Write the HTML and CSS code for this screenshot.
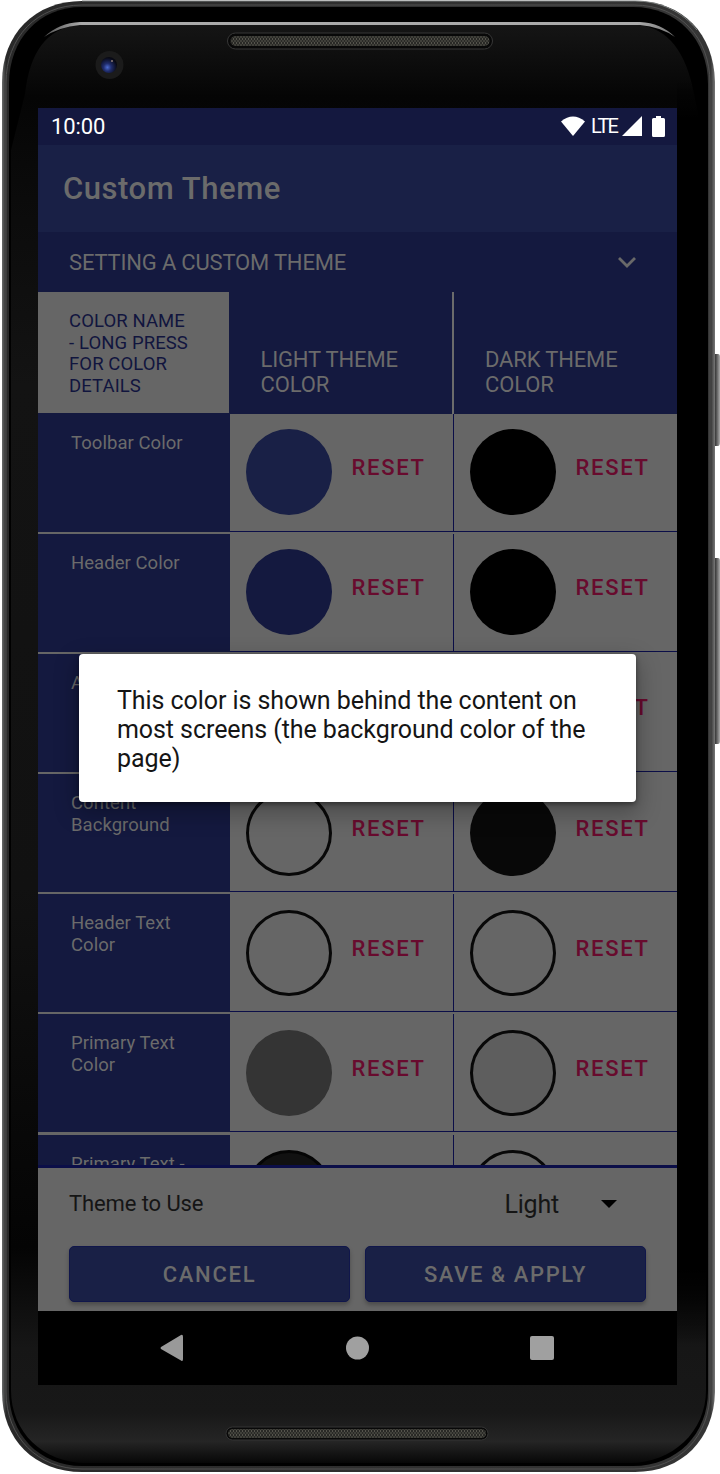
FILE: index.html
```html
<!DOCTYPE html>
<html lang="en">
<head>
<meta charset="utf-8">
<title>Custom Theme</title>
<link rel="stylesheet" href="styles.css">
</head>
<body>
<div class="phone">
  <svg class="chassis" width="720" height="1474" viewBox="0 0 720 1474" aria-hidden="true">
    <defs>
      <linearGradient id="rim" x1="0" x2="1" y1="0" y2="0"><stop offset="0" stop-color="#696b6b"/><stop offset=".006" stop-color="#292929"/><stop offset=".994" stop-color="#353535"/><stop offset="1" stop-color="#777"/></linearGradient>
      <linearGradient id="face" x1="0" x2="0" y1="0" y2="1"><stop offset="0" stop-color="#151515"/><stop offset=".05" stop-color="#050505"/><stop offset=".12" stop-color="#0b0b0b"/><stop offset=".25" stop-color="#131313"/><stop offset=".6" stop-color="#111"/><stop offset=".85" stop-color="#040404"/><stop offset=".92" stop-color="#161616"/><stop offset=".965" stop-color="#181818"/><stop offset=".985" stop-color="#252525"/><stop offset="1" stop-color="#070707"/></linearGradient>
      <linearGradient id="dim" x1="0" x2="0" y1="0" y2="1"><stop offset="0" stop-color="#000" stop-opacity="0"/><stop offset=".03" stop-color="#000"/><stop offset=".94" stop-color="#000"/><stop offset="1" stop-color="#000" stop-opacity="0"/></linearGradient>
      <linearGradient id="shine" x1="0" x2="1" y1="0" y2="0"><stop offset="0" stop-color="#555"/><stop offset=".06" stop-color="#aaa"/><stop offset=".94" stop-color="#aaa"/><stop offset="1" stop-color="#777"/></linearGradient>
      <linearGradient id="side" x1="0" x2="1" y1="0" y2="0"><stop offset="0" stop-color="#111"/><stop offset=".5" stop-color="#555"/><stop offset="1" stop-color="#aaa"/></linearGradient>
      <pattern id="mesh" width="3" height="4" patternUnits="userSpaceOnUse"><rect width="3" height="4" fill="#292926"/><path d="M1 0v2M2.500 2v2" stroke="#55544c"/></pattern>
      <radialGradient id="lens" cx=".4" cy=".65" r=".6"><stop offset="0" stop-color="#4c6bd0"/><stop offset=".4" stop-color="#202d6d"/><stop offset="1" stop-color="#080914"/></radialGradient>
    </defs>
    <path d="M713 354h5q2 0 2 3v85q0 4-2 4h-5zM713 558h5q2 0 2 3v180q0 3-2 3h-5z" fill="url(#side)"/>
    <path d="M82 1H635C683 1 714 34 715 82V1392C714 1439 682 1472 635 1472H82C35 1472 2 1440 2 1392V82C2 34 35 1 82 1Z" fill="url(#rim)"/>
    <path d="M82 1H635C660 1 683 12 697 30" fill="none" stroke="#777b7a"/>
    <path d="M82 5H634C680 5 710 38 710 83V1392C710 1436 679 1469 634 1469H82C38 1469 6 1437 6 1392V83C6 37 37 5 82 5Z" fill="none" stroke="#505050"/>
    <path d="M82 7H633C677 7 708 39 708 84V1391C708 1434 677 1466 633 1466H82C39 1466 9 1434 9 1391V84C9 39 39 7 82 7Z" fill="#000"/>
    <path d="M78 25H639Q682 30 694 94L706 150V1390C706 1432 672 1463 630 1463H86C43 1463 11 1432 11 1390V150L25 94Q32 30 78 25Z" fill="url(#face)"/>
    <path d="M677 80H707V1345H677Z" fill="url(#dim)"/>
    <path d="M44 37Q59 23 80 22H640Q661 23 675 37Q661 27 640 25H80Q59 27 44 37Z" fill="url(#shine)"/>
    <rect x="227.500" y="33" width="265" height="16" rx="8" fill="#080808" stroke="#373737"/>
    <rect x="230.500" y="36" width="259" height="10" rx="5" fill="url(#mesh)"/>
    <rect x="226" y="1427" width="262" height="13" rx="6.500" fill="#080808" stroke="#343434"/>
    <rect x="228" y="1429" width="258" height="9" rx="4.500" fill="url(#mesh)"/>
    <circle cx="109.500" cy="65" r="14" fill="#1b1b1b"/><circle cx="109" cy="65" r="8" fill="url(#lens)"/><circle cx="112" cy="61" r="1" fill="#8b7a78"/>
  </svg>

  <main class="screen">
    <header class="status">
      <span class="clock">10:00</span>
      <svg class="wifi" width="24" height="20" viewBox="0 0 24 20"><path d="M0 5.500Q12-4.500 24 5.500L12 20Z" fill="#fff"/></svg>
      <span class="lte">LTE</span>
      <svg class="signal" width="20" height="20" viewBox="0 0 20 20"><path d="M20 0V20H0Z" fill="#fff"/></svg>
      <svg class="battery" width="13" height="21" viewBox="0 0 13 21"><path d="M4 0H9V2H11.500Q13 2 13 3.500V19.500Q13 21 11.500 21H1.500Q0 21 0 19.500V3.500Q0 2 1.500 2H4Z" fill="#fff"/></svg>
    </header>
    <h1 class="toolbar"><span>Custom Theme</span></h1>
    <div class="accordion"><span class="section">SETTING A CUSTOM THEME</span><svg width="20" height="13" viewBox="0 0 20 13"><path d="M2 2L10 10L18 2" fill="none" stroke="#696969" stroke-width="2.800"/></svg></div>

    <section class="table">
      <div class="head">
        <div class="head-name">COLOR NAME<br>- LONG PRESS<br>FOR COLOR<br>DETAILS</div>
        <div class="head-theme">LIGHT THEME<br>COLOR</div>
        <div class="head-theme">DARK THEME<br>COLOR</div>
      </div>
      <div class="row"><div class="name">Toolbar Color</div><div class="cell first"><i class="swatch toolbar-color"></i><span class="reset">RESET</span></div><div class="cell"><i class="swatch black"></i><span class="reset">RESET</span></div></div>
      <div class="row"><div class="name">Header Color</div><div class="cell first"><i class="swatch header-color"></i><span class="reset">RESET</span></div><div class="cell"><i class="swatch black"></i><span class="reset">RESET</span></div></div>
      <div class="row"><div class="name">Accent</div><div class="cell first"></div><div class="cell"><i class="swatch"></i><span class="reset">RESET</span></div></div>
      <div class="row"><div class="name">Content<br>Background</div><div class="cell first"><i class="swatch outline"></i><span class="reset">RESET</span></div><div class="cell"><i class="swatch charcoal"></i><span class="reset">RESET</span></div></div>
      <div class="row"><div class="name">Header Text<br>Color</div><div class="cell first"><i class="swatch outline"></i><span class="reset">RESET</span></div><div class="cell"><i class="swatch outline"></i><span class="reset">RESET</span></div></div>
      <div class="row"><div class="name">Primary Text<br>Color</div><div class="cell first"><i class="swatch gray"></i><span class="reset">RESET</span></div><div class="cell"><i class="swatch outline pale"></i><span class="reset">RESET</span></div></div>
      <div class="row"><div class="name">Primary Text -</div><div class="cell first"><i class="swatch dark"></i></div><div class="cell"><i class="swatch outline"></i></div></div>
    </section>

    <footer class="footer">
      <div class="choice"><span class="choice-label">Theme to Use</span><span class="choice-value">Light</span><svg width="16" height="8" viewBox="0 0 16 8"><path d="M0 0H16L8 8Z"/></svg></div>
      <div class="buttons"><button class="button">CANCEL</button><button class="button save">SAVE &amp; APPLY</button></div>
    </footer>
    <nav class="nav">
      <svg width="24" height="28" viewBox="0 0 24 28"><path d="M1 13L21 1Q23 0 23 3V25Q23 28 21 26.500L1 15Q0 14 1 13Z" fill="#999"/></svg>
      <svg width="24" height="24" viewBox="0 0 24 24"><circle cx="12.500" cy="12" r="11.500" fill="#a0a0a0"/></svg>
      <svg width="24" height="24" viewBox="0 0 24 24"><rect width="24" height="24" rx="2" fill="#a0a0a0"/></svg>
    </nav>
    <div class="dialog"><div>This color is shown behind the content on</div><div>most screens (the background color of the</div><div>page)</div></div>
  </main>
</div>
</body>
</html>
```
FILE: styles.css
```css
* { box-sizing: border-box; }
body { margin: 0; background: #fff; font-family: Roboto, sans-serif; }
.phone { position: relative; width: 720px; height: 1474px; padding: 107.5px 43px 89px 38px; overflow: hidden; }
.chassis { position: absolute; inset: 0; }
.screen { position: relative; width: 639px; height: 1277.5px; overflow: hidden; display: flex; flex-direction: column; background: #666; }
.status { height: 37px; flex: none; display: flex; align-items: center; padding: 0 12px 0 13px; background: #14183f; color: #fff; }
.clock { font-size: 22px; letter-spacing: -.1px; margin-right: auto; padding-top: 1px; }
.wifi { margin-right: 6px; }
.lte { font-size: 20px; width: 28px; letter-spacing: -1.7px; }
.signal { margin: 0 10px 0 3px; }
.toolbar { margin: 0; height: 87.5px; flex: none; padding-left: 25px; background: #192046; color: #6b6b6b; font-size: 31px; font-weight: 500; line-height: 88px; letter-spacing: .55px; }
.accordion { height: 60px; flex: none; display: flex; align-items: center; justify-content: space-between; padding: 0 40px 0 31px; background: #14193f; color: #6b6b6b; }
.section { font-size: 22px; padding-top: 1px; letter-spacing: -.18px; }
.table { height: 873px; flex: none; overflow: hidden; }
.head { height: 121.5px; display: grid; grid-template-columns: 191.5px 222.5px 225px; background: #14193f; color: #6b6b6b; }
.head-name { width: 191px; height: 121px; padding: 19px 31px; background: #666; color: #11153e; font-size: 18.5px; line-height: 21.7px; letter-spacing: .1px; white-space: nowrap; }
.head-theme { padding: 55px 31px 0; font-size: 22px; line-height: 25px; letter-spacing: -.15px; }
.head-theme:last-child { border-left: 2px solid #6b6b6b; }
.row { height: 120.2px; display: grid; grid-template-columns: 192px 224px 223px; }
.name { height: 118px; padding: 19px 20px 0 33px; background: #14193f; color: #6b6b6b; font-size: 18.5px; line-height: 21.8px; letter-spacing: .05px; white-space: nowrap; }
.cell { height: 118px; display: flex; align-items: flex-start; gap: 20px; padding: 15.5px 0 0 15.5px; border-bottom: 1px solid #0b0e48; }
.cell.first { border-right: 1px solid #0b0e48; }
.swatch { width: 86px; height: 86px; flex: none; border-radius: 50%; }
.toolbar-color { background: #192046; }
.header-color { background: #14193f; }
.black { background: #000; }
.charcoal { background: #080808; }
.gray { background: #343434; }
.dark { background: #111; border: 3px solid #050505; }
.outline { border: 3px solid #080808; }
.pale { background: #5e5e5e; }
.reset { color: #680b2e; font-size: 22px; line-height: 26px; font-weight: 500; letter-spacing: 1.7px; padding-top: 26px; }
.footer { height: 146px; flex: none; border-top: 3px solid #0b0e48; background: #666; padding: 0 31px; }
.choice { height: 70px; padding-top: 1px; display: flex; align-items: center; color: #151515; }
.choice-label { font-size: 22px; letter-spacing: -.1px; margin-right: auto; }
.choice-value { font-size: 25px; letter-spacing: -.2px; padding-top: 2px; margin-right: 42px; }
.choice svg { margin-right: 29px; }
.buttons { margin-top: 8px; display: grid; grid-template-columns: 1fr 1fr; gap: 15px; }
.button { height: 56px; padding: 2px 0 0; border: 1px solid #10164b; border-radius: 5px; background: #192046; color: #6b6b6b; font: 500 22px/52px Roboto, sans-serif; letter-spacing: 1.75px; box-shadow: 0 3px 4px #0004; }
.button.save { letter-spacing: 1.6px; }
.nav { height: 74.5px; flex: none; display: flex; align-items: center; justify-content: space-between; padding: 0 123px 0 122px; background: #000; }
.dialog { position: absolute; left: 41px; top: 546px; width: 557px; height: 148.5px; padding: 32px 38px; border-radius: 4px; background: #fff; color: #151515; font-size: 25px; line-height: 29.4px; letter-spacing: -.07px; white-space: nowrap; box-shadow: 0 9px 22px 3px #0004, 0 2px 5px #0006; }
```
